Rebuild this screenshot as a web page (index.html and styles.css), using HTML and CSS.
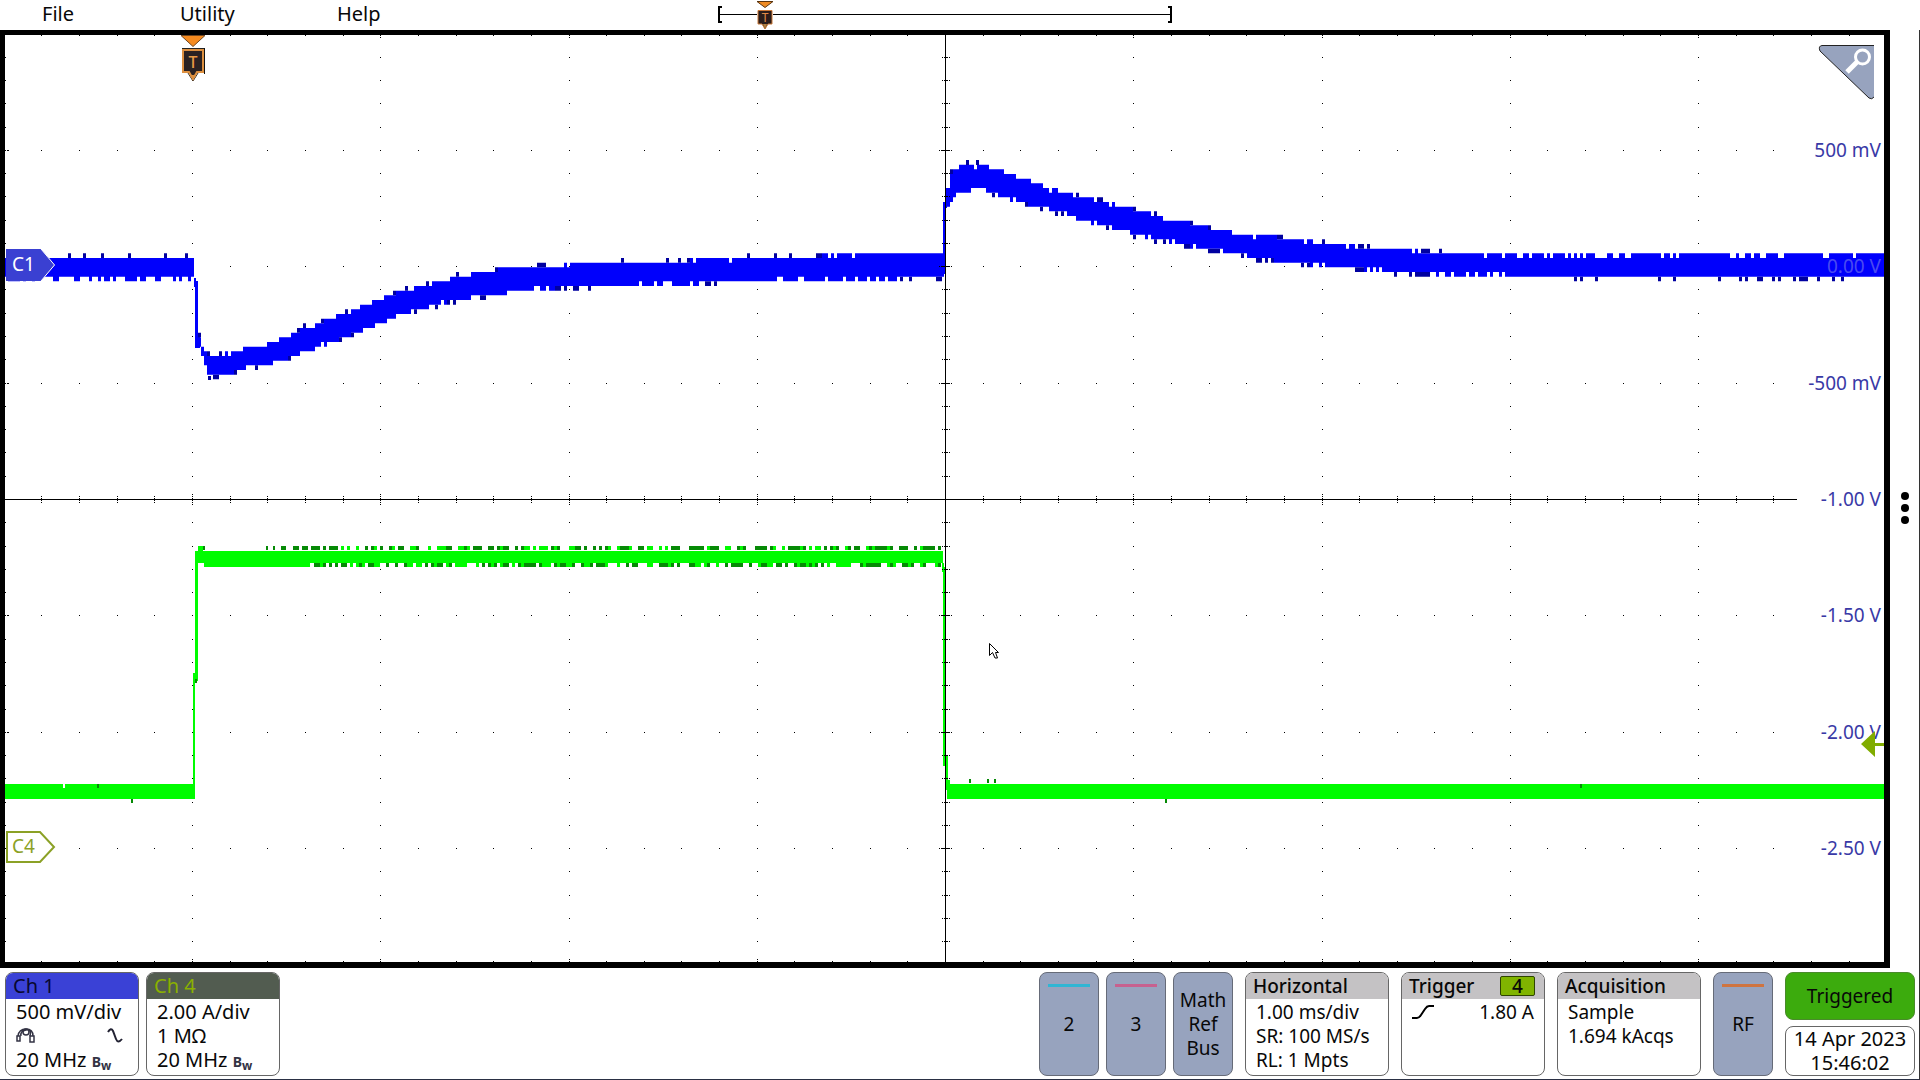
FILE: index.html
```html
<!DOCTYPE html>
<html lang="en">
<head>
<meta charset="utf-8">
<title>Oscilloscope</title>
<link rel="stylesheet" href="styles.css">
</head>
<body>
<header class="menubar">
  <button class="menu" type="button">File</button>
  <button class="menu" type="button">Utility</button>
  <button class="menu" type="button">Help</button>
  <svg class="record" viewBox="0 0 456 30" width="456" height="30" aria-label="Record view">
    <path d="M5 7H2V22H5M451 7H454V22H451" fill="none" stroke="#000" stroke-width="2"/>
    <path d="M2 14.500H40M56 14.500H453" stroke="#000"/>
    <path d="M40 1.500H56L48 7.500Z" fill="#ee8b25" stroke="#5a3410"/>
    <path d="M41 10.500H55V24H51L48 29L45 24H41Z" fill="#2a1c1a" stroke="#c97838"/>
    <path d="M46 24H50L48 29Z" fill="#b08040"/>
    <text x="48" y="22" class="mark-small">T</text>
  </svg>
</header>

<main class="workspace">
  <section class="plot">
    <svg class="screen" viewBox="5 35 1879 927" aria-label="Waveform view">
      <path id="dots"/>
      <path id="ch1" class="ch1"/>
      <path id="ch1-edge" class="ch1-edge"/>
      <path id="ch4" class="ch4"/>
      <path id="ch4-edge" class="ch4-edge"/>
      <path id="axes" class="axes"/>
      <g class="scale" id="scale">
        <text x="1881" y="157">500 mV</text>
        <text x="1881" y="273" class="zero">0.00 V</text>
        <text x="1881" y="390">-500 mV</text>
        <text x="1881" y="506">-1.00 V</text>
        <text x="1881" y="622">-1.50 V</text>
        <text x="1881" y="739">-2.00 V</text>
        <text x="1881" y="855">-2.50 V</text>
      </g>
      <path d="M181 35.500H205L193 46.500Z" fill="#f58a1f" stroke="#6d4520"/>
      <path d="M204.500 48V74" stroke="#111"/>
      <path d="M182 48.500H204M188 73L193 81L198 73" fill="none" stroke="#222"/>
      <path d="M183 50H203V72H197L193 79L189 72H183Z" fill="#2b2222" stroke="#dd9040" stroke-width="2"/>
      <path d="M190 75H196L193 80Z" fill="#dd9040"/>
      <text x="193" y="68" class="mark">T</text>
      <path d="M6 249H41L55 265L41 281H6Z" fill="#3a40d2"/>
      <path d="M41 249L54.500 265L41 281" fill="none" stroke="#fff"/>
      <text x="12" y="271" class="tag tag-one">C1</text>
      <path d="M7 832H40L54 847L40 862H7Z" fill="#fff" stroke="#8ba126" stroke-width="2"/>
      <text x="12" y="853" class="tag tag-four">C4</text>
      <path d="M1861 744L1875 731V743H1884V746H1875V757Z" fill="#80ac00"/>
      <path d="M989.500 643.500V655.500L992.500 652.500L995 658H997.500L995.500 652.500H998.500Z" fill="#fff" stroke="#000"/>
    </svg>
    <button class="zoom" type="button" aria-label="Zoom">
      <svg viewBox="0 0 58 56" width="58" height="56">
        <path d="M4 1H56V52Q54 55 51 53L2 6Q0 1 4 1Z" fill="#97a3be"/>
        <path d="M56 .500H4Q0 1 2 6L51 53Q54 55 56 52" fill="none" stroke="#222"/>
        <circle cx="44.500" cy="12" r="7" fill="none" stroke="#fff" stroke-width="3"/>
        <path d="M39 17L29 27" stroke="#fff" stroke-width="5"/>
      </svg>
    </button>
  </section>
  <aside class="side">
    <button class="more" type="button" aria-label="More">
      <svg viewBox="0 0 10 34" width="10" height="34"><circle cx="5" cy="5" r="4"/><circle cx="5" cy="17" r="4"/><circle cx="5" cy="29" r="4"/></svg>
    </button>
  </aside>
</main>

<footer class="settings">
  <section class="card channel">
    <h2 class="head head-one">Ch 1</h2>
    <div class="body">
      <p>500 mV/div</p>
      <p class="icons">
        <svg viewBox="0 0 20 18" width="20" height="18" fill="none" stroke="#334" stroke-width="1.500"><path d="M2 9Q3 2 10 2T17 9M5 9Q4 4 10 3T14 9"/><rect x="1" y="9" width="3" height="5"/><rect x="14" y="9" width="4" height="6"/><circle cx="10" cy="5" r="3"/></svg>
        <svg viewBox="0 0 16 18" width="16" height="18" fill="none" stroke="#223" stroke-width="2"><path d="M1 5Q4 0 6 4L9 12Q11 17 15 12"/></svg>
      </p>
      <p>20 MHz <span class="bw">B<sub>w</sub></span></p>
    </div>
  </section>
  <section class="card channel">
    <h2 class="head head-four">Ch 4</h2>
    <div class="body">
      <p>2.00 A/div</p>
      <p>1 MΩ</p>
      <p>20 MHz <span class="bw">B<sub>w</sub></span></p>
    </div>
  </section>
  <div class="adders">
    <button class="add line-cyan" type="button">2</button>
    <button class="add line-pink" type="button">3</button>
    <button class="add" type="button">Math<br>Ref<br>Bus</button>
  </div>
  <section class="card">
    <h2 class="head">Horizontal</h2>
    <div class="body">
      <p>1.00 ms/div</p>
      <p>SR: 100 MS/s</p>
      <p>RL: 1 Mpts</p>
    </div>
  </section>
  <section class="card">
    <h2 class="head">Trigger <span class="source">4</span></h2>
    <div class="body">
      <p class="level">
        <svg viewBox="0 0 22 16" width="22" height="16" fill="none" stroke="#000" stroke-width="2"><path d="M0 14H5Q7 14 9 11L13 5Q15 2 17 2H22"/></svg>
        <span>1.80 A</span>
      </p>
    </div>
  </section>
  <section class="card">
    <h2 class="head">Acquisition</h2>
    <div class="body">
      <p>Sample</p>
      <p>1.694 kAcqs</p>
    </div>
  </section>
  <button class="add line-orange" type="button">RF</button>
  <div class="status">
    <button class="triggered" type="button">Triggered</button>
    <time class="clock" datetime="2023-04-14T15:46:02">14 Apr 2023<br>15:46:02</time>
  </div>
</footer>
<script src="scope.js"></script>
</body>
</html>
```
FILE: styles.css
```css
* { box-sizing: border-box; }

body {
  margin: 0;
  min-height: 100vh;
  display: flex;
  flex-direction: column;
  background: #fff;
  color: #080808;
  font: 19px/24px "Noto Sans", "Open Sans", sans-serif;
}

button {
  margin: 0;
  padding: 0;
  border: 0;
  background: none;
  color: inherit;
  font: inherit;
}

h2, p { margin: 0; font-weight: 400; }

/* Menu bar */
.menubar {
  display: grid;
  grid-template-columns: 138px 157px 380px 1fr;
  height: 30px;
  padding-left: 42px;
}
.menu { text-align: left; padding-bottom: 2px; font-size: 20px; }
.record { display: block; }
.mark-small {
  font-size: 12px;
  fill: #e08a48;
  text-anchor: middle;
}

/* Waveform area */
.workspace { display: flex; }
.plot {
  position: relative;
  flex: 1;
  border: solid #000;
  border-width: 5px 6px 6px 5px;
}
.screen { display: block; width: 100%; height: auto; }
.side {
  width: 30px;
  display: flex;
  align-items: center;
  justify-content: center;
  border-right: 1px solid #333;
  padding-top: 17px;
}
.more { display: flex; }
.zoom {
  position: absolute;
  top: 10px;
  right: 8px;
  display: flex;
}
.ch1 { fill: #0000fc; }
.ch1-edge { fill: #0000a0; }
.ch4 { fill: #00fc00; }
.ch4-edge { fill: #068a06; }
.axes { fill: #000; }
.scale { fill: #3939a6; text-anchor: end; }
.zero { fill: #4a4af0; }
.mark { font-size: 16px; font-weight: 500; fill: #e89a45; text-anchor: middle; }
.tag { font-size: 19px; }
.tag-one { fill: #fff; }
.tag-four { fill: #8ba126; }

/* Settings bar */
.settings {
  display: flex;
  gap: 12px;
  min-height: 112px;
  padding: 4px 4px 3px 5px;
  border-right: 1px solid #333;
  border-bottom: 1px solid #2a3044;
}
.card {
  width: 144px;
  border: 1px solid #666;
  border-radius: 8px;
  overflow: hidden;
}
.channel { width: 134px; font-size: 20px; }
.channel + .channel { margin-left: -5px; }
.head {
  display: flex;
  align-items: center;
  justify-content: space-between;
  height: 26px;
  padding: 0 9px 0 7px;
  background: #c4c2c4;
  font-size: 19px;
  font-weight: 500;
}
.head-one { background: #3a41d6; color: #080830; font-weight: 400; }
.head-four { background: #525c50; color: #8ab000; font-weight: 400; }
.channel .head { font-size: 20px; }
.body { padding: 1px 10px 0; white-space: nowrap; }
.icons, .level {
  display: flex;
  align-items: center;
  justify-content: space-between;
}
.icons { height: 24px; padding-right: 5px; }
.bw { font-size: 14px; font-weight: 700; color: #334; }
.bw sub { font-size: 12px; line-height: 0; vertical-align: -3px; }
.source {
  width: 35px;
  height: 20px;
  border: 1px solid #2e4400;
  border-radius: 2px;
  background: #80b400;
  line-height: 18px;
  text-align: center;
}
.adders { display: flex; gap: 7px; margin-left: auto; }
.add {
  width: 60px;
  position: relative;
  border: 1px solid #666b78;
  border-radius: 8px;
  background: #97a3be;
}
.add::before {
  content: "";
  position: absolute;
  top: 11px;
  left: 8px;
  right: 8px;
  height: 3px;
  background: var(--line, none);
}
.line-cyan { --line: #30b6d4; }
.line-pink { --line: #c7618f; }
.line-orange { --line: #cf7440; }
.status {
  display: flex;
  flex-direction: column;
  gap: 6px;
  width: 130px;
}
.triggered, .clock {
  flex: 1;
  border: 1px solid #666;
  border-radius: 8px;
  text-align: center;
}
.triggered { background: #3cab0d; border-color: #4a8a2c; }
.clock { font-size: 20px; }
```
FILE: scope.js
```js
// Graticule: ten divisions across and eight down, five ticks per division.
const CX = 945, CY = 499, DX = 37.65, DY = 23.28;
const LEFT = 5, RIGHT = 1884, TOP = 35, BOTTOM = 962;
const rect = (x, y, w, h) => `M${x} ${y}h${w}v${h}h${-w}z`;
const set = (id, d) => document.getElementById(id).setAttribute('d', d);
const gridX = i => Math.round(CX + i * DX);
const gridY = j => Math.round(CY + j * DY);

let dots = '', axes = '';
for (let i = -24; i <= 24; i++) {
  const x = gridX(i);
  if (x > 1860) continue;
  dots += rect(x, TOP, 1, 1) + rect(x, BOTTOM - 1, 1, 1);
  if (i % 5 === 0) dots += rect(x, TOP + 2, 1, 1) + rect(x, BOTTOM - 3, 1, 1);
  for (let j = -3; j <= 3; j++) {
    if (j && x < 1790) dots += rect(x, gridY(j * 5), 1, 1);
  }
  if (x < 1797) {
    const reach = i % 5 ? 3 : 5;
    for (let k = -reach; k <= reach; k += 2) axes += rect(x, CY + k, 1, 1);
  }
}
for (let j = -19; j <= 19; j++) {
  const y = gridY(j);
  dots += rect(LEFT, y, 1, 1);
  if (j % 5 === 0) dots += rect(LEFT + 2, y, 2, 1);
  for (let i = -4; i <= 4; i++) {
    if (i) dots += rect(gridX(i * 5), y, 1, 1);
  }
  axes += j % 5
    ? [-3, 2, 4].map(k => rect(CX + k, y, 1, 1)).join('') + rect(CX - 1, y, 3, 1)
    : rect(CX - 4, y, 9, 1) + rect(CX - 6, y, 1, 1) + rect(CX + 6, y, 1, 1);
}
axes += rect(CX, TOP, 1, BOTTOM - TOP) + rect(LEFT, CY, 1797 - LEFT, 1);
set('dots', dots);
set('axes', axes);

let seed = 7;
const random = () => (seed = (seed * 16807) % 2147483647) / 2147483647;

// Channel 1 envelope: x, upper limit, lower limit.
const before = [[5,257,279],[194,257,279]];
const dip = [[198,335,348],[201,343,356],[205,350,370],[208,356,376],[230,352,373],
  [250,347,368],[283,338,360],[300,329,354],[340,314,339],[360,306,331],[400,291,315],
  [450,277,301],[485,271,296],[517,267,291],[570,264,287],[697,260,284],[740,258,281],
  [800,257,280],[845,254,280],[944,253,278]];
const bump = [[947,188,207],[950,172,200],[957,167,192],[983,165,189],[1003,171,199],
  [1021,178,203],[1060,192,213],[1083,197,221],[1106,202,227],[1138,211,236],
  [1160,216,241],[1181,221,245],[1213,229,250],[1253,235,258],[1300,239,264],
  [1340,245,268],[1420,251,274],[1500,255,276],[1640,255,278],[1884,254,278]];
const STEP = 4.667, BASE = 253.3;
const snap = v => Math.round((v - BASE) / STEP) * STEP + BASE;

// Each column takes its nearest quantiser level, disturbed by noise; the
// columns that reach past the steady level are drawn darker.
let ch1 = '', edge = '';
function envelope(points) {
  const end = points[points.length - 1][0];
  let n = 0;
  for (let x = points[0][0]; x < end; x += 3) {
    while (x >= points[n + 1][0]) n++;
    const [x0, a0, b0] = points[n], [x1, a1, b1] = points[n + 1];
    const t = (x - x0) / (x1 - x0);
    const a = a0 + (a1 - a0) * t, b = b0 + (b1 - b0) * t;
    const w = Math.min(3, end - x);
    const noise = () => (random() + random() - 1) * 2.8;
    const top = snap(a + noise()), low = snap(b + noise());
    const calmTop = Math.max(top, snap(a)), calmLow = Math.min(low, snap(b));
    ch1 += rect(x, calmTop, w, calmLow - calmTop);
    if (top < calmTop) edge += rect(x, top, w, calmTop - top);
    if (low > calmLow) edge += rect(x, calmLow, w, low - calmLow);
  }
}
envelope(before);
envelope(dip);
envelope(bump);
ch1 += rect(194, 278, 2, 9) + rect(195, 281, 3, 67) + rect(197, 333, 3, 15);
ch1 += rect(943, 202, 3, 72) + rect(945, 188, 2, 20);
edge += rect(208, 376, 3, 4) + rect(966, 160, 3, 5) + rect(976, 160, 3, 5);
set('ch1', ch1);
set('ch1-edge', edge);

// Channel 4: a current pulse between two flat levels.
let ch4 = rect(5, 784, 58, 15) + rect(63, 788, 2, 11) + rect(65, 784, 130, 15) +
  rect(193, 673, 2, 126) + rect(195, 551, 3, 130) + rect(198, 546, 5, 5) +
  rect(197, 551, 746, 12) + rect(204, 562, 106, 5) +
  rect(942, 563, 2, 9) + rect(943, 567, 3, 199) + rect(945, 756, 3, 34) +
  rect(947, 780, 3, 19) + rect(949, 784, 935, 15);
let fringe = '';
for (let x = 266; x < 941; x += 3) {
  const density = x < 300 ? 0.3 : 0.62;
  for (const y of [546, 563]) {
    if (random() > density || (y === 563 && x < 310)) continue;
    if (random() < 0.6) fringe += rect(x, y, 3, 4);
    else ch4 += rect(x, y, 3, 4);
  }
}
for (const [x, y] of [[203,546],[266,546],[273,546],[284,546],[131,799],[97,784],
  [195,679],[969,779],[987,779],[994,779],[1165,799],[1580,784]]) {
  fringe += rect(x, y, 2, 4);
}
set('ch4', ch4);
set('ch4-edge', fringe);
```
